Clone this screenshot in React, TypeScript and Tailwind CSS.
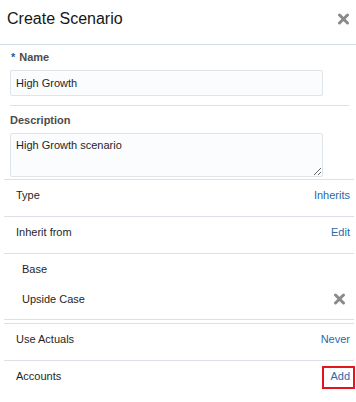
import React from 'react'

const font = { fontFamily: '"Liberation Sans", Arial, sans-serif' }

function CrossIcon({ className = '' }: { className?: string }) {
  return (
    <svg viewBox="0 0 12 12" className={className} aria-hidden="true">
      <path d="M2 2 L10 10 M10 2 L2 10" stroke="#8a8a8a" strokeWidth="3" strokeLinecap="round" />
    </svg>
  )
}

function Row({ label, action, boxed }: { label: string; action: string; boxed?: boolean }) {
  return (
    <div
      className={`flex h-[37px] items-start justify-between pt-[8px] pl-[12px] pr-[4px] ${
        boxed ? '' : 'border-b border-[#dbe1e6]'
      }`}
    >
      <span className="text-[11px] leading-[14px] text-[#1f1f1f]">{label}</span>
      <span className="relative text-[11px] leading-[14px] text-[#2b69ad]">
        {action}
        {boxed && (
          <span className="pointer-events-none absolute -left-[8px] -right-[5px] -top-[3px] -bottom-[6px] border-2 border-[#e3161d]" />
        )}
      </span>
    </div>
  )
}

export default function App() {
  return (
    <div className="h-[402px] w-[356px] overflow-hidden bg-white" style={font}>
      {/* Header */}
      <div className="flex h-[45px] items-start justify-between border-b border-[#d6dde3] pl-[7px] pr-[6px] pt-[10px]">
        <h1 className="text-[16px] leading-[18px] text-[#161616]">Create Scenario</h1>
        <CrossIcon className="mt-[3px] h-[12px] w-[13px]" />
      </div>

      {/* Name */}
      <div className="ml-[10px] mr-[7px] border-b border-[#dbe1e6] pt-[5px] pb-[9px]">
        <label className="flex items-start text-[11px] leading-[14px] font-bold text-[#4c4c4c]">
          <span className="ml-[1px] mr-[4px] text-[#2f5d8c]">*</span>
          Name
        </label>
        <input
          defaultValue="High Growth"
          className="mt-[6px] block h-[26px] w-[313px] rounded-[2px] border border-[#dfe4e8] bg-[#fbfcfe] px-[5px] text-[11px] text-[#1f1f1f] outline-none"
        />
      </div>

      {/* Description */}
      <div className="ml-[10px] pt-[7px] pb-[2px]">
        <label className="block text-[11px] leading-[14px] font-bold text-[#4c4c4c]">Description</label>
        <textarea
          defaultValue="High Growth scenario"
          className="mt-[6px] block h-[44px] w-[313px] rounded-[2px] border border-[#dfe4e8] bg-[#fbfcfe] px-[5px] pt-[4px] text-[11px] leading-[14px] text-[#1f1f1f] outline-none"
        />
      </div>

      {/* Properties */}
      <div className="ml-[4px] mr-[2px] border-t border-[#dbe1e6]">
        <Row label="Type" action="Inherits" />
        <Row label="Inherit from" action="Edit" />

        <div className="border-b border-[#dbe1e6] pb-[5px] pl-[18px] pr-[8px]">
          <div className="flex h-[30px] items-center text-[11px] leading-[14px] text-[#1f1f1f]">Base</div>
          <div className="flex h-[30px] items-center justify-between text-[11px] leading-[14px] text-[#1f1f1f]">
            <span>Upside Case</span>
            <CrossIcon className="h-[12px] w-[13px]" />
          </div>
        </div>

        <div className="mt-[3px] border-t border-[#dbe1e6]">
          <Row label="Use Actuals" action="Never" />
          <Row label="Accounts" action="Add" boxed />
        </div>
      </div>
    </div>
  )
}
